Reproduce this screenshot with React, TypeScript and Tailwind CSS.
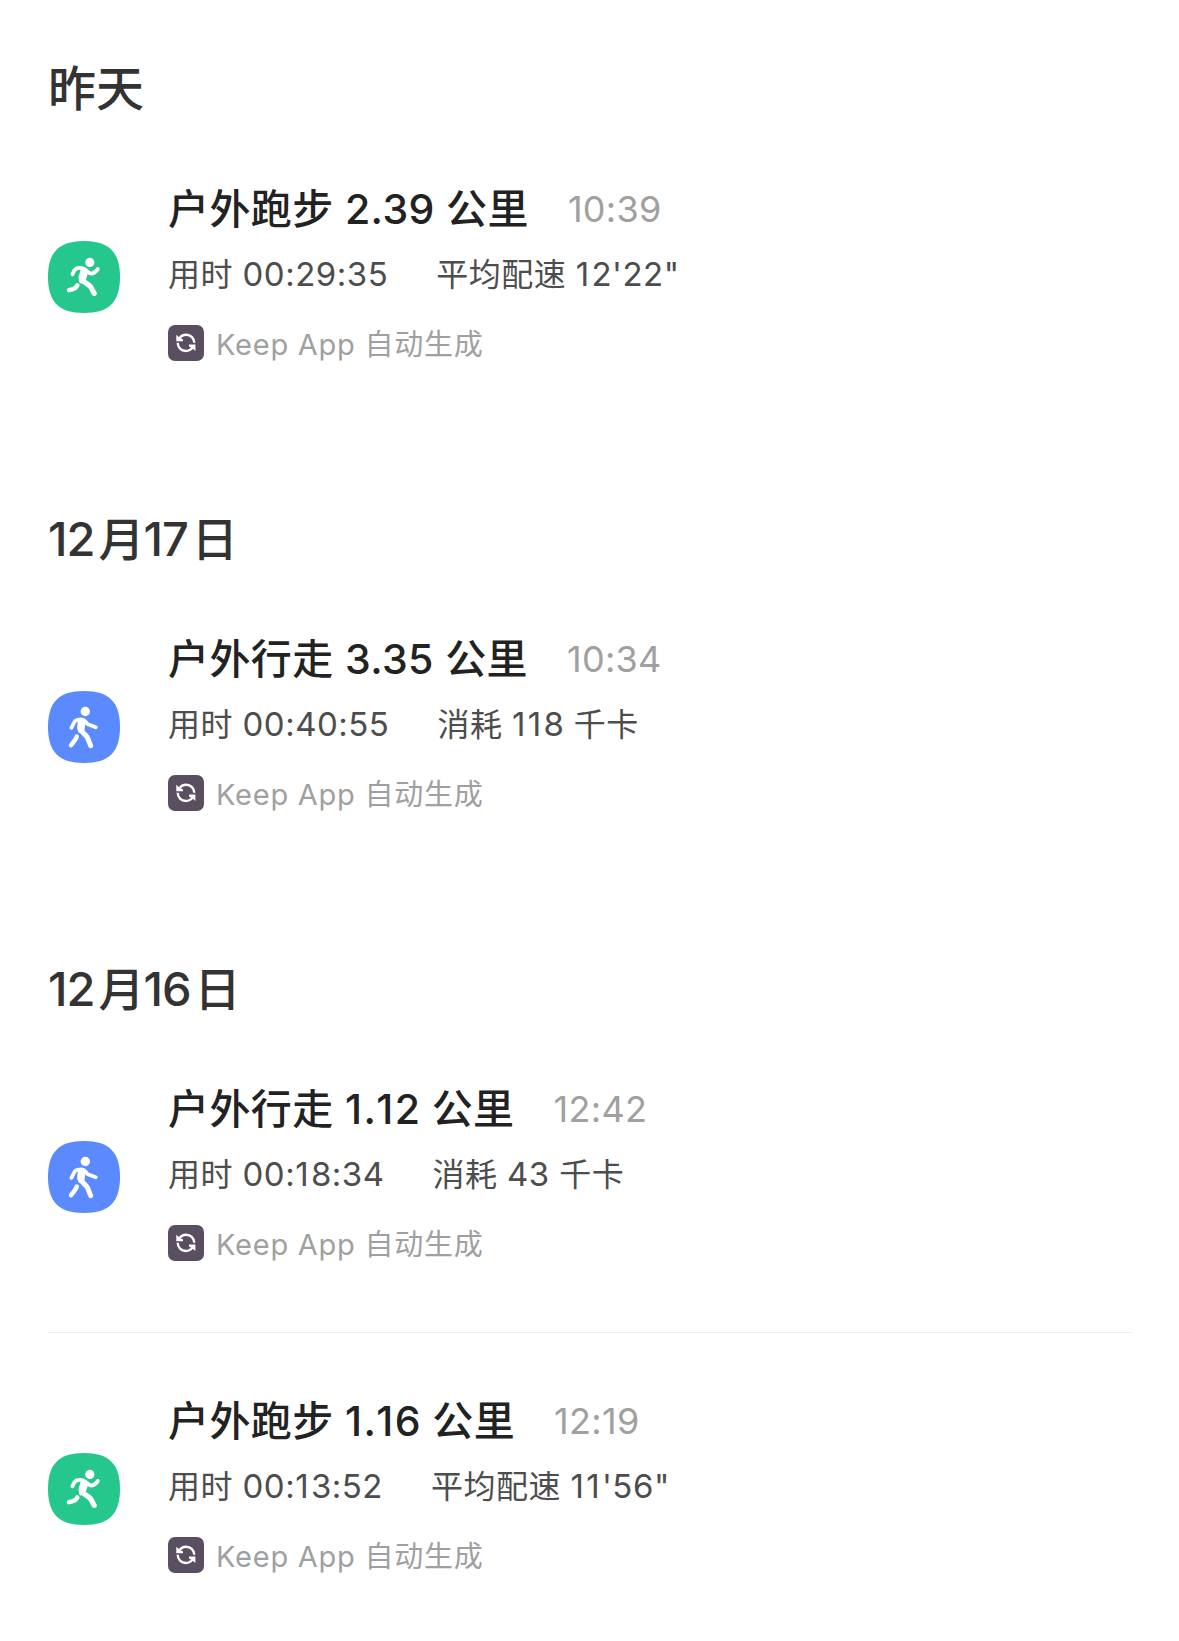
import React from 'react';
import { clsx } from 'clsx';

type WorkoutType = 'run' | 'walk';

interface Workout {
  id: number;
  type: WorkoutType;
  name: string;
  distance: string;
  time: string;
  duration: string;
  extraLabel: string;
  extraValue: string;
  extraUnit?: string;
}

interface Day {
  label: string;
  workouts: Workout[];
}

const days: Day[] = [
  {
    label: '昨天',
    workouts: [
      { id: 1, type: 'run', name: '户外跑步', distance: '2.39', time: '10:39', duration: '00:29:35', extraLabel: '平均配速', extraValue: '12\'22"' },
    ],
  },
  {
    label: '12月17日',
    workouts: [
      { id: 2, type: 'walk', name: '户外行走', distance: '3.35', time: '10:34', duration: '00:40:55', extraLabel: '消耗', extraValue: '118', extraUnit: '千卡' },
    ],
  },
  {
    label: '12月16日',
    workouts: [
      { id: 3, type: 'walk', name: '户外行走', distance: '1.12', time: '12:42', duration: '00:18:34', extraLabel: '消耗', extraValue: '43', extraUnit: '千卡' },
      { id: 4, type: 'run', name: '户外跑步', distance: '1.16', time: '12:19', duration: '00:13:52', extraLabel: '平均配速', extraValue: '11\'56"' },
    ],
  },
];

// The figure 1 is narrow in Inter, so it gets a little more room.
const Digits: React.FC<{ value: string; className?: string; oneClassName?: string }> = ({
  value,
  className,
  oneClassName = 'tracking-[0.07em]',
}) => (
  <span className={className}>
    {value.split(/(1)/).map((part, i) =>
      part === '1' ? <span key={i} className={oneClassName}>1</span> : part
    )}
  </span>
);

const WorkoutIcon: React.FC<{ type: WorkoutType }> = ({ type }) => (
  <svg viewBox="0 0 72 72" className="mt-[63px] size-[72px] shrink-0">
    <path
      d="M36 0C61 0 72 11 72 36S61 72 36 72 0 61 0 36 11 0 36 0Z"
      className={clsx(type === 'run' ? 'fill-[#26c78c]' : 'fill-[#5b8aff]')}
    />
    {type === 'run' ? (
      <g className="fill-none stroke-white" strokeWidth={3.8} strokeLinecap="round" strokeLinejoin="round">
        <circle cx="41.8" cy="21.4" r="4.6" className="fill-white" stroke="none" />
        <path d="M24.4 33.2C25.6 30.5 26.8 28.2 28.8 27.3C31 26.6 34 26.8 36 28C39.5 29.8 41 33 43.8 32.6C46.4 32 48.4 30.4 49.8 28" />
        <path d="M34.5 29L38.4 31L36 38.4L33 40.5L32.4 36.4Z" className="fill-white" />
        <path d="M33.8 38.6C35.6 41.6 40.6 42.8 42.8 46L46.2 52.4" strokeWidth={5.2} />
        <path d="M29.4 44.4C28.2 46.6 27 47.6 25 48.2L21 49.2" strokeWidth={4.4} />
      </g>
    ) : (
      <g className="fill-none stroke-white" strokeWidth={3.8} strokeLinecap="round" strokeLinejoin="round">
        <circle cx="37.3" cy="20.5" r="4.7" className="fill-white" stroke="none" />
        <path d="M23.4 36.8L26.4 31C27.4 29 29.5 28.4 33.6 28.4C37 28.6 37.6 31 39.8 33.2L47.8 36.2" />
        <path d="M31.8 29.5L35.8 30.5L34.6 39L32 40L31 37Z" className="fill-white" />
        <path d="M33 38.6C34 42 38.2 43.6 39.8 47.4L42.6 54.6" strokeWidth={5} />
        <path d="M28.8 45.6C27.6 48.6 25.6 51 23 54.2" strokeWidth={4.4} />
      </g>
    )}
  </svg>
);

const SyncIcon: React.FC = () => (
  <svg viewBox="0 0 36 36" className="size-9 shrink-0 rounded-[7px] bg-[#5a4f60]">
    <g className="fill-none stroke-white" strokeWidth={2.4}>
      <path d="M11.4 13.4C13 11 15.4 9.8 18.2 9.8C22.8 9.8 26.2 13.2 26.3 17.8" />
      <path d="M9.7 17.8C9.8 22.6 13.2 26 17.8 26C20.6 26 23 24.8 24.8 22.4" />
    </g>
    <path d="M8.3 9.8L11 12.2L15 14.4V16.2H8.3ZM27.4 26L24.6 23.6L21 21.4V19.6H27.4Z" className="fill-white" />
  </svg>
);

const WorkoutRow: React.FC<{ workout: Workout }> = ({ workout: w }) => (
  <li className="flex h-[312px] gap-12 pt-[57px]">
    <WorkoutIcon type={w.type} />
    <div>
      <div className="flex h-[60px] items-center whitespace-pre">
        <h3 className="pt-1 text-[41px] font-medium tracking-[0.4px] text-[#222]">
          {w.name} <Digits value={w.distance} oneClassName="tracking-[0.035em]" /> 公里
        </h3>
        <time className="ml-[39px] pt-px text-[36px] tracking-[0.3px] text-[#a0a0a0]">{w.time}</time>
      </div>
      <div className="mt-3 flex h-[46px] items-center gap-12 whitespace-pre pt-[3px] text-[32px] tracking-[0.5px] text-[#4d4d4d]">
        <p>
          用时 <Digits value={w.duration} className="text-[33px]" />
        </p>
        <p>
          {w.extraLabel} <Digits value={w.extraValue} className="text-[33px]" />
          {w.extraUnit && ` ${w.extraUnit}`}
        </p>
      </div>
      <div className="mt-[29px] flex h-9 items-center gap-3">
        <SyncIcon />
        <span className="whitespace-pre pt-[3px] text-[29px] tracking-[0.75px] text-[#a0a0a0]">Keep App 自动生成</span>
      </div>
    </div>
  </li>
);

const DayLabel: React.FC<{ label: string }> = ({ label }) => (
  <h2 className="h-[66px] text-[48px] leading-[68px] font-medium text-[#333]">
    {/\d/.test(label)
      ? label.split(/(\d+)/).map((part, i) => (
          <span key={i} className={clsx(/\d/.test(part) ? 'mr-1 text-[47px] tracking-[-1px]' : 'text-[46px] tracking-[-1px]')}>
            {part}
          </span>
        ))
      : label}
  </h2>
);

export default function App() {
  return (
    <main className="flex h-[1641px] flex-col gap-[72px] overflow-hidden bg-white px-12 pt-[55px] font-[Inter,'Noto_Sans_CJK_SC',sans-serif]">
      {days.map(day => (
        <section key={day.label}>
          <DayLabel label={day.label} />
          <ul className="divide-y divide-[#eee]">
            {day.workouts.map(w => (
              <WorkoutRow key={w.id} workout={w} />
            ))}
          </ul>
        </section>
      ))}
    </main>
  );
}
